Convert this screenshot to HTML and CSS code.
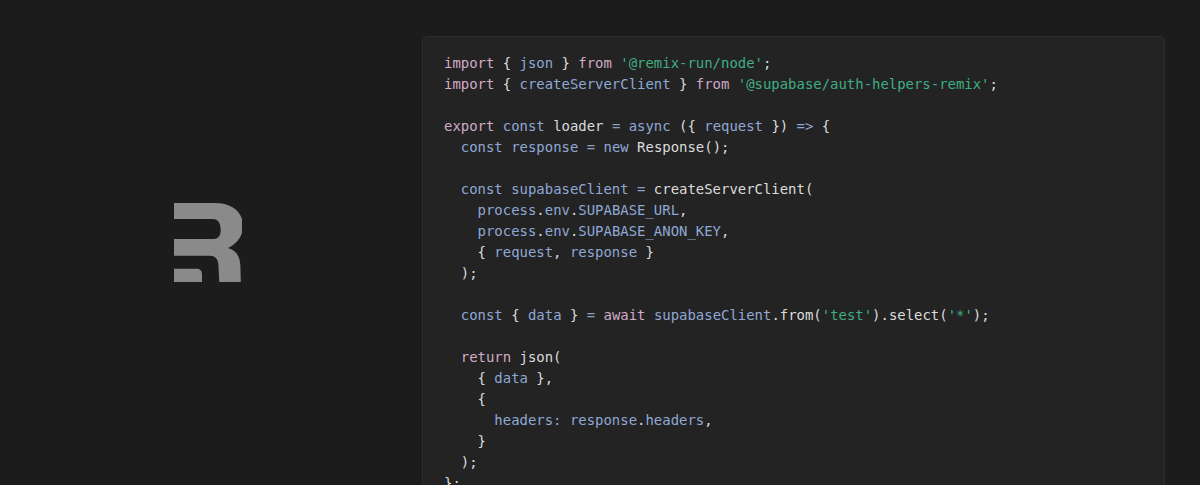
FILE: index.html
```html
<!DOCTYPE html>
<html lang="en">
<head>
<meta charset="utf-8">
<title>Remix with Supabase</title>
<link rel="stylesheet" href="styles.css">
</head>
<body>
<main class="page">
<aside class="brand">
<svg class="logo" viewBox="0 0 68 79" width="68" height="79" aria-label="Remix logo">
<path d="M0 0H41C58 0 69 9 69 23C69 33 63 41 54 45C62 47 66 53 66.4 63L66.8 79H45.3L44.4 62C44 55.5 41 52.7 36 52.7H0V36H39.5C44 36 46.7 33 46.7 27C46.7 20 44 16 39 16H0Z"/>
<path d="M0 65.7H23C26.5 65.7 28 68 28 72V79H0Z"/>
</svg>
</aside>
<section class="card">
<pre class="code"><code><span class="k">import</span> { <span class="v">json</span> } <span class="k">from</span> <span class="s">'@remix-run/node'</span>;
<span class="k">import</span> { <span class="v">createServerClient</span> } <span class="k">from</span> <span class="s">'@supabase/auth-helpers-remix'</span>;

<span class="k">export</span> <span class="v">const</span> loader <span class="o">=</span> <span class="v">async</span> ({ <span class="v">request</span> }) <span class="v">=&gt;</span> {
  <span class="v">const</span> <span class="v">response</span> <span class="o">=</span> <span class="v">new</span> Response();

  <span class="v">const</span> <span class="v">supabaseClient</span> <span class="o">=</span> createServerClient(
    <span class="v">process</span>.<span class="v">env</span>.<span class="v">SUPABASE_URL</span>,
    <span class="v">process</span>.<span class="v">env</span>.<span class="v">SUPABASE_ANON_KEY</span>,
    { <span class="v">request</span>, <span class="v">response</span> }
  );

  <span class="v">const</span> { <span class="v">data</span> } <span class="o">=</span> <span class="k">await</span> <span class="v">supabaseClient</span>.from(<span class="s">'test'</span>).select(<span class="s">'*'</span>);

  <span class="k">return</span> json(
    { <span class="v">data</span> },
    {
      <span class="v">headers:</span> <span class="v">response</span>.<span class="v">headers</span>,
    }
  );
};</code></pre>
</section>
</main>
</body>
</html>
```
FILE: styles.css
```css
html, body {
  margin: 0;
  height: 100%;
  background: #1c1c1c;
  overflow: hidden;
}

.page {
  display: flex;
  height: 485px;
  padding: 36px 35px 0 0;
  box-sizing: border-box;
  overflow: hidden;
}

.brand {
  flex: 0 0 422px;
  display: flex;
  align-items: center;
  height: 413px;
  padding-left: 174px;
  box-sizing: border-box;
}

.logo {
  display: block;
  fill: #8a8a8a;
}

.card {
  flex: 1;
  min-height: 600px;
  background: #232323;
  border: 1px solid #2e2e2e;
  border-radius: 6px;
  padding: 16px 21px;
  box-sizing: border-box;
}

.code {
  margin: 0;
  font-family: "DejaVu Sans Mono", monospace;
  font-size: 13.95px;
  line-height: 21px;
  color: #dcdcdc;
}

.k { color: #d2abc8; }
.v { color: #8fa8d6; }
.s { color: #3fae84; }
.o { color: #8d9dbd; }
```
